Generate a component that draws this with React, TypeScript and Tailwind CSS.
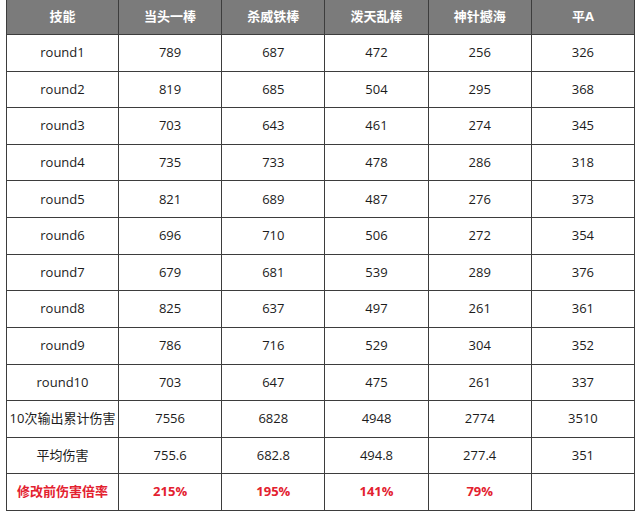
import React from 'react';

const headers = ['技能', '当头一棒', '杀威铁棒', '泼天乱棒', '神针撼海', '平A'];

const rows: string[][] = [
  ['round1', '789', '687', '472', '256', '326'],
  ['round2', '819', '685', '504', '295', '368'],
  ['round3', '703', '643', '461', '274', '345'],
  ['round4', '735', '733', '478', '286', '318'],
  ['round5', '821', '689', '487', '276', '373'],
  ['round6', '696', '710', '506', '272', '354'],
  ['round7', '679', '681', '539', '289', '376'],
  ['round8', '825', '637', '497', '261', '361'],
  ['round9', '786', '716', '529', '304', '352'],
  ['round10', '703', '647', '475', '261', '337'],
  ['10次输出累计伤害', '7556', '6828', '4948', '2774', '3510'],
  ['平均伤害', '755.6', '682.8', '494.8', '277.4', '351'],
];

const ratio = ['修改前伤害倍率', '215%', '195%', '141%', '79%', ''];

const App = () => {
  return (
    <div className="w-[640px] h-[512px] bg-white font-['Open_Sans','Noto_Sans_CJK_SC',sans-serif] text-[13px] text-[#1c1c1c]">
      <div className="ml-[6px] w-[629px] h-[511px] bg-[#3d3d3d] border-x border-b border-[#3d3d3d] grid grid-cols-[111px_repeat(5,1fr)] grid-rows-[34px_repeat(13,1fr)] gap-px">
        {headers.map((h) => (
          <div key={h} className="bg-[#7b7b7b] text-white font-bold flex items-center justify-center">
            {h}
          </div>
        ))}
        {rows.map((row) =>
          row.map((cell, i) => (
            <div key={row[0] + i} className="bg-white flex items-center justify-center">
              {cell}
            </div>
          ))
        )}
        {ratio.map((cell, i) => (
          <div key={'r' + i} className="bg-white flex items-center justify-center font-bold text-[#e3212f]">
            {cell}
          </div>
        ))}
      </div>
    </div>
  );
};

export default App;
